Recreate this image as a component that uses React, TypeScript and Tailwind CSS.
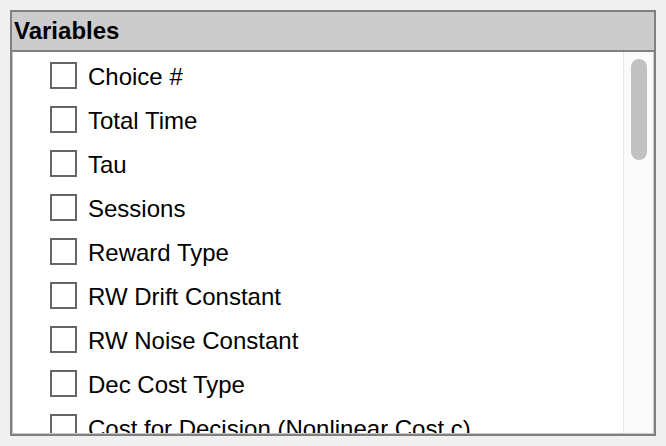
const variables = [
  'Choice #',
  'Total Time',
  'Tau',
  'Sessions',
  'Reward Type',
  'RW Drift Constant',
  'RW Noise Constant',
  'Dec Cost Type',
  'Cost for Decision (Nonlinear Cost c)',
];

const VariableRow = ({ label }: { label: string }) => (
  <label className="flex h-[44px] shrink-0 items-center">
    <span className="block h-[27px] w-[27px] shrink-0 border-2 border-[#666666] bg-white" />
    <span className="ml-[11px] whitespace-nowrap pt-[3px] text-[24px] leading-none text-black">{label}</span>
  </label>
);

export default function App() {
  return (
    <div
      className="h-[446px] w-[666px] bg-[#f0f0f0] p-[10px]"
      style={{ fontFamily: '"Liberation Sans", Arial, sans-serif' }}
    >
      <div className="flex h-[426px] w-[646px] flex-col border-2 border-[#808080]">
        <div className="flex h-[40px] shrink-0 items-center border-b-2 border-[#808080] bg-[#cccccc] pb-[1px] pl-[2px]">
          <span className="text-[24px] font-bold leading-none text-black">Variables</span>
        </div>
        <div className="flex min-h-0 flex-1 border-x border-b border-[#c8c8c8] bg-white">
          <div className="flex min-w-0 flex-1 flex-col overflow-hidden pl-[37px] pt-[1px]">
            {variables.map((v) => (
              <VariableRow key={v} label={v} />
            ))}
          </div>
          <div className="w-[30px] shrink-0 border-l border-[#e8e8e8] bg-[#fafafa] pl-[7px] pt-[7px]">
            <div className="h-[101px] w-[16px] rounded-full bg-[#c1c1c1]" />
          </div>
        </div>
      </div>
    </div>
  );
}
